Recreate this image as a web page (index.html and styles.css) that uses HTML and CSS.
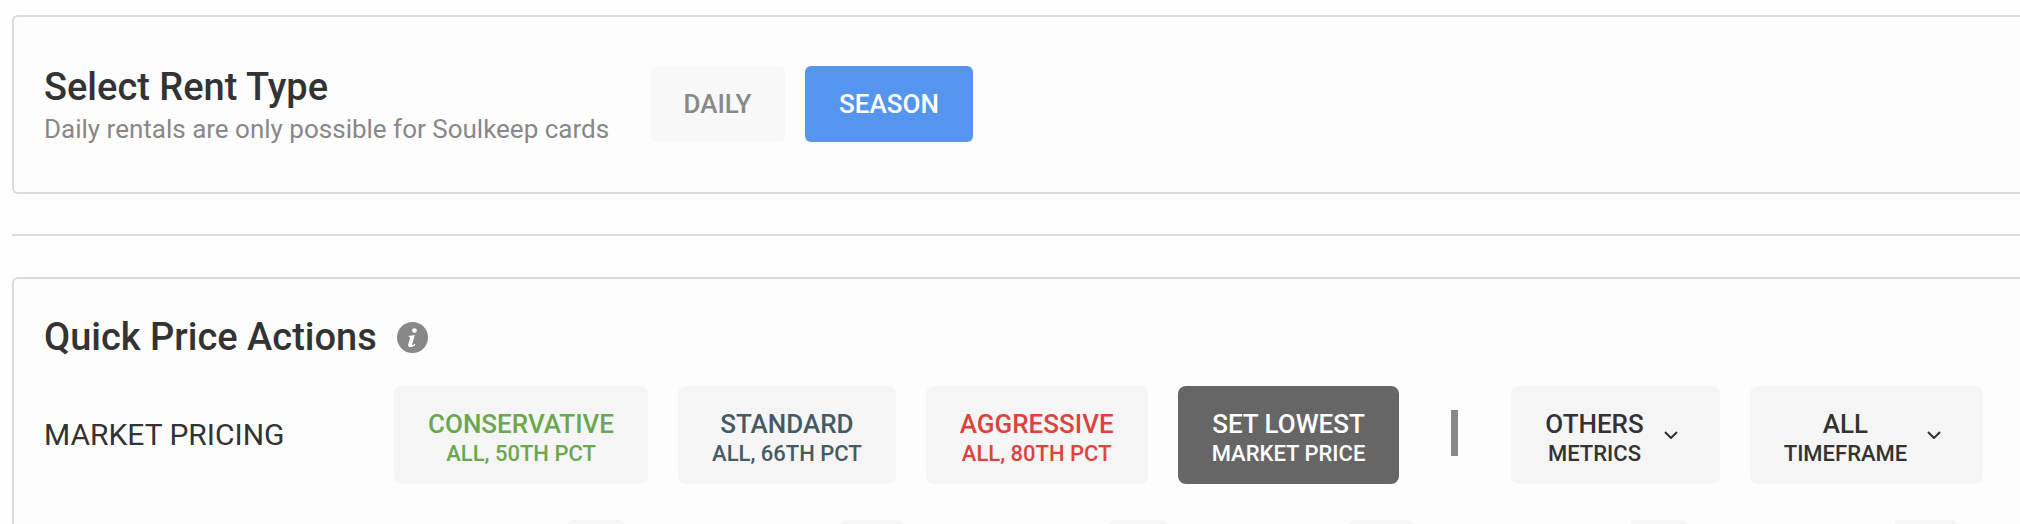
FILE: index.html
```html
<!DOCTYPE html>
<html lang="en">
<head>
  <meta charset="UTF-8">
  <meta name="viewport" content="width=device-width, initial-scale=1.0"/>
  <title>Rent Pricing</title>
  <link rel="stylesheet" href="styles.css">
</head>
<body>
  <main>
    <!-- rent type -->
    <section class="card rent-card">
      <div class="rent-text">
        <h2>Select Rent Type</h2>
        <p>Daily rentals are only possible for Soulkeep cards</p>
      </div>
      <div class="rent-btns">
        <button class="rent-btn">DAILY</button>
        <button class="rent-btn active">SEASON</button>
      </div>
    </section>

    <hr class="sep">

    <!-- quick actions -->
    <section class="card price-card">
      <div class="price-head">
        <h2>Quick Price Actions</h2>
        <svg class="info" viewBox="0 0 31 31" aria-hidden="true">
          <circle cx="15.5" cy="15.5" r="15.5" fill="#888"/>
          <circle cx="17.4" cy="8.6" r="2.4" fill="#fff"/>
          <path d="M11.6 14l6.2-1-2.6 9.4c-.2.8.5 1 1 .6l1.6-1.3.6.7c-1.500 1.700-3 2.700-5 2.700-1.900 0-2.600-1-2.200-2.600l1.800-6.600c.2-.9-.2-1.100-1.500-1.100z" fill="#fff"/>
        </svg>
      </div>

      <div class="price-row">
        <div class="price-label">MARKET PRICING</div>
        <button class="price-btn green"><b>CONSERVATIVE</b><small>ALL, 50TH PCT</small></button>
        <button class="price-btn slate"><b>STANDARD</b><small>ALL, 66TH PCT</small></button>
        <button class="price-btn red"><b>AGGRESSIVE</b><small>ALL, 80TH PCT</small></button>
        <button class="price-btn dark"><b>SET LOWEST</b><small>MARKET PRICE</small></button>
        <span class="bar"></span>
        <button class="price-btn drop">
          <span class="drop-text"><b>OTHERS</b><small>METRICS</small></span>
          <svg class="chev" viewBox="0 0 14 8" aria-hidden="true"><path d="M1 1l6 6 6-6"/></svg>
        </button>
        <button class="price-btn drop">
          <span class="drop-text"><b>ALL</b><small>TIMEFRAME</small></span>
          <svg class="chev" viewBox="0 0 14 8" aria-hidden="true"><path d="M1 1l6 6 6-6"/></svg>
        </button>
      </div>

      <div class="field-row">
        <span class="step"></span>
        <span class="step"></span>
        <span class="step"></span>
        <span class="step"></span>
        <span class="step"></span>
        <span class="step"></span>
      </div>
    </section>
  </main>
</body>
</html>
```

FILE: styles.css
```css
:root {
  --border:   #dcdcdc;
  --card-bg:  #fdfdfd;
  --btn-bg:   #f5f5f5;
  --text:     #333;
  --muted:    #888;
  --blue:     #5595ee;
  --font:     Roboto, 'Liberation Sans', Arial, sans-serif;
}
* { box-sizing: border-box; margin:0; padding:0 }
html, body { height:524px; overflow:hidden; }
body {
  font-family: var(--font);
  background: #fefefe;
  color: var(--text);
}
main { padding:15px 0 0 12px; width:2040px; }
button { font-family:inherit; border:none; }

.card {
  background:var(--card-bg);
  border:2px solid var(--border);
  border-right:none;
  border-radius:6px 0 0 6px;
}

/* rent type */
.rent-card {
  height:179px;
  display:flex;
  align-items:center;
  padding:0 0 1px 30px;
}
.rent-text { width:606px; }
.rent-text h2 { font-size:38px; font-weight:500; line-height:44px; }
.rent-text p { font-size:26px; line-height:30px; color:var(--muted); margin-top:5px; }
.rent-btns { display:flex; gap:20px; }
.rent-btn {
  height:76px;
  width:135px;
  border-radius:6px;
  background:#f8f8f8;
  color:#888;
  font-size:26px;
  font-weight:500;
}
.rent-btn.active { width:168px; background:var(--blue); color:#fff; }

.sep { border:none; border-top:2px solid var(--border); margin:40px 0 41px; }

/* quick actions */
.price-card {
  height:300px;
  padding-left:30px;
  border-bottom:none;
  border-radius:6px 0 0 0;
}
.price-head { display:flex; align-items:center; gap:20px; height:44px; margin-top:36px; }
.price-head h2 { font-size:38px; font-weight:500; }
.info { width:31px; height:31px; }

.price-row { display:flex; align-items:center; gap:30px; margin-top:27px; }
.price-label { width:320px; font-size:30px; margin-top:-2px; }
.price-btn {
  height:98px;
  padding:0 34px;
  border-radius:8px;
  background:var(--btn-bg);
  display:flex;
  flex-direction:column;
  align-items:center;
  justify-content:center;
  color:var(--text);
}
.price-btn b { font-size:26px; font-weight:500; line-height:30px; margin-top:6px; }
.price-btn small { font-size:22px; font-weight:500; line-height:26px; margin-top:2px; }
.green { color:#6aa84f; }
.slate { color:#455a64; }
.red { color:#dd423c; }
.dark { background:#666; color:#fff; }
.bar { width:7px; height:46px; background:#888; margin:-4px 23px 0 22px; }

.drop { flex-direction:row; padding:0 42px 0 34px; gap:20px; }
.drop-text { display:flex; flex-direction:column; align-items:center; }
.chev { width:14px; height:8px; }
.chev path { fill:none; stroke:var(--text); stroke-width:2; }

/* next row, cut off by the window */
.field-row {
  display:grid;
  grid-template-columns:581px 279px 263px 246px 275px 270px;
  margin-top:36px;
}
.step {
  justify-self:end;
  width:58px;
  height:20px;
  background:var(--btn-bg);
  border-radius:6px;
}
.step:nth-child(even) { width:64px; }
```
